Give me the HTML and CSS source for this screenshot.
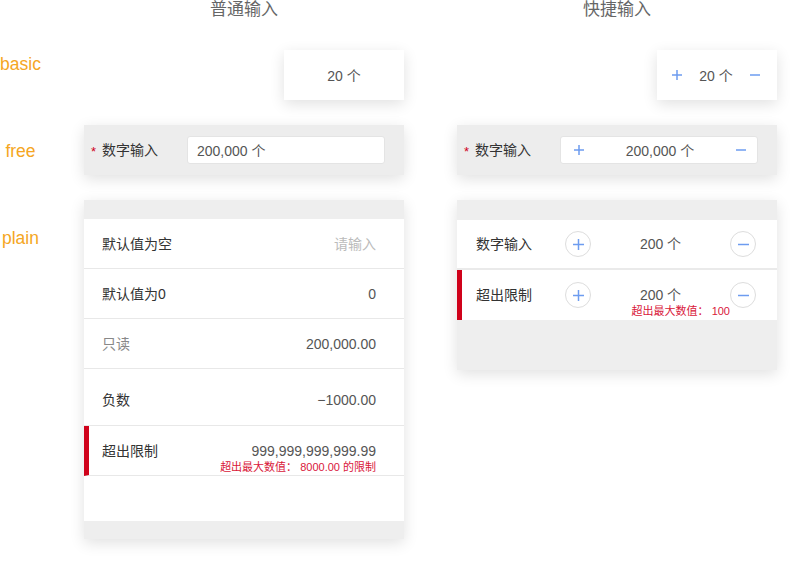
FILE: index.html
```html
<html lang="zh-CN">
<head>
  <meta charset="UTF-8">
  <meta name="viewport" content="width=device-width, initial-scale=1.0">
  <title>数字输入</title>
  <link rel="stylesheet" href="styles.css">
</head>
<body>
  <div class="page">
    <div class="labels">
      <div class="demo-label">basic</div>
      <div class="demo-label">free</div>
      <div class="demo-label">plain</div>
    </div>

    <!-- 普通输入 -->
    <div class="column">
      <h2 class="column-title">普通输入</h2>

      <div class="basic-box">20 个</div>

      <div class="free-box">
        <span class="star">*</span>
        <span class="free-label">数字输入</span>
        <div class="free-input">200,000 个</div>
      </div>

      <ul class="plain-list">
        <li class="plain-row">
          <span class="row-label">默认值为空</span>
          <span class="row-value placeholder">请输入</span>
        </li>
        <li class="plain-row">
          <span class="row-label">默认值为0</span>
          <span class="row-value">0</span>
        </li>
        <li class="plain-row">
          <span class="row-label readonly">只读</span>
          <span class="row-value">200,000.00</span>
        </li>
        <li class="plain-row tall">
          <span class="row-label">负数</span>
          <span class="row-value">−1000.00</span>
        </li>
        <li class="plain-row error">
          <span class="row-label">超出限制</span>
          <span class="row-value">999,999,999,999.99<span class="tip">超出最大数值： 8000.00 的限制</span></span>
        </li>
        <li class="plain-spacer"></li>
      </ul>
    </div>

    <!-- 快捷输入 -->
    <div class="column right">
      <h2 class="column-title">快捷输入</h2>

      <div class="basic-box quick">
        <svg class="icon" width="10" height="10" viewBox="0 0 10 10"><path d="M5 0v10M0 5h10"/></svg>
        <span>20 个</span>
        <svg class="icon" width="10" height="10" viewBox="0 0 10 10"><path d="M0 5h10"/></svg>
      </div>

      <div class="free-box">
        <span class="star">*</span>
        <span class="free-label">数字输入</span>
        <div class="free-input quick">
          <svg class="icon" width="10" height="10" viewBox="0 0 10 10"><path d="M5 0v10M0 5h10"/></svg>
          <span class="quick-value">200,000 个</span>
          <svg class="icon" width="10" height="10" viewBox="0 0 10 10"><path d="M0 5h10"/></svg>
        </div>
      </div>

      <ul class="plain-list quick-list">
        <li class="quick-row">
          <span class="row-label">数字输入</span>
          <span class="circle"><svg class="icon" width="11" height="11" viewBox="0 0 11 11"><path d="M5.5 0v11M0 5.5h11"/></svg></span>
          <span class="quick-value">200 个</span>
          <span class="circle"><svg class="icon" width="11" height="11" viewBox="0 0 11 11"><path d="M0 5.5h11"/></svg></span>
        </li>
        <li class="quick-row error">
          <span class="row-label">超出限制</span>
          <span class="circle"><svg class="icon" width="11" height="11" viewBox="0 0 11 11"><path d="M5.5 0v11M0 5.5h11"/></svg></span>
          <span class="quick-value">200 个<span class="tip">超出最大数值： 100</span></span>
          <span class="circle"><svg class="icon" width="11" height="11" viewBox="0 0 11 11"><path d="M0 5.5h11"/></svg></span>
        </li>
      </ul>
    </div>
  </div>
</body>
</html>
```

FILE: styles.css
```css
body{
  margin: 0;
  background: white;
  font-family: "Liberation Sans", "Noto Sans CJK SC", sans-serif;
  font-size: 14px;
  color: #333;
}
.page{
  display: flex;
  align-items: flex-start;
}
.labels{
  width: 41px;
  padding-top: 54px;
}
.demo-label{
  height: 20px;
  line-height: 20px;
  margin-bottom: 67px;
  text-align: center;
  font-size: 17.5px;
  color: #f5a623;
  white-space: nowrap;
}
.column{
  width: 320px;
  margin-left: 43px;
}
.column.right{
  margin-left: 53px;
}
.column-title{
  margin: 0;
  height: 20px;
  line-height: 20px;
  text-align: center;
  font-size: 17px;
  font-weight: normal;
  color: #666;
}
.icon{
  display: block;
  stroke: #6d9cf0;
  stroke-width: 1.5;
  fill: none;
}

/* basic */
.basic-box{
  width: 120px;
  height: 50px;
  margin: 30px 0 0 auto;
  background: white;
  display: flex;
  align-items: center;
  justify-content: center;
  color: #555;
  box-shadow: 0 4px 14px rgba(0, 0, 0, 0.12);
}
.basic-box.quick{
  gap: 17px;
  padding-right: 2px;
  box-sizing: border-box;
}

/* free */
.free-box{
  height: 50px;
  margin-top: 25px;
  background: #ededed;
  display: flex;
  align-items: center;
  padding: 0 19px 0 7px;
  box-shadow: 0 4px 14px rgba(0, 0, 0, 0.12);
}
.star{
  width: 11px;
  color: #d0021b;
  font-size: 13px;
  line-height: 20px;
  padding-top: 3px;
}
.free-label{
  width: 85px;
  line-height: 20px;
}
.free-input{
  flex: 1;
  height: 28px;
  box-sizing: border-box;
  background: white;
  border: 1px solid #e4e4e4;
  border-radius: 3px;
  padding-left: 9px;
  display: flex;
  align-items: center;
  color: #555;
}
.free-input.quick{
  padding: 0 11px 0 13px;
}
.quick-value{
  flex: 1;
  text-align: center;
  color: #555;
}

/* plain */
.plain-list{
  list-style: none;
  margin: 25px 0 0;
  padding: 19px 0 18px;
  background: #eee;
  box-shadow: 0 4px 14px rgba(0, 0, 0, 0.12);
}
.plain-row{
  height: 50px;
  box-sizing: border-box;
  background: white;
  border-bottom: 1px solid #e8e8e8;
  display: flex;
  align-items: center;
  justify-content: space-between;
  padding: 0 28px 0 18px;
  line-height: 20px;
}
.plain-row.tall{
  height: 57px;
  padding-top: 6px;
}
.plain-row.error, .quick-row.error{
  border-left: 5px solid #d0021b;
  padding-left: 13px;
}
.row-label.readonly{
  color: #888;
}
.row-value{
  position: relative;
  color: #555;
}
.row-value.placeholder{
  color: #bbb;
}
.tip{
  position: absolute;
  right: 0;
  top: 100%;
  font-size: 11px;
  line-height: 12px;
  color: #d9173a;
  white-space: nowrap;
}
.plain-spacer{
  height: 45px;
  background: white;
}

/* quick plain */
.quick-list{
  padding: 20px 0 50px;
}
.quick-row{
  height: 50px;
  box-sizing: border-box;
  background: white;
  display: flex;
  align-items: center;
  padding: 0 21px 0 19px;
  line-height: 20px;
}
.quick-row:first-child{
  border-bottom: 2px solid #eaeaea;
}
.quick-row.error{
  padding-left: 14px;
}
.quick-row .row-label{
  width: 89px;
}
.circle{
  width: 26px;
  height: 26px;
  box-sizing: border-box;
  border: 1px solid #ddd;
  border-radius: 50%;
  display: flex;
  align-items: center;
  justify-content: center;
}
.quick-row .quick-value{
  position: relative;
  height: 20px;
}
```
